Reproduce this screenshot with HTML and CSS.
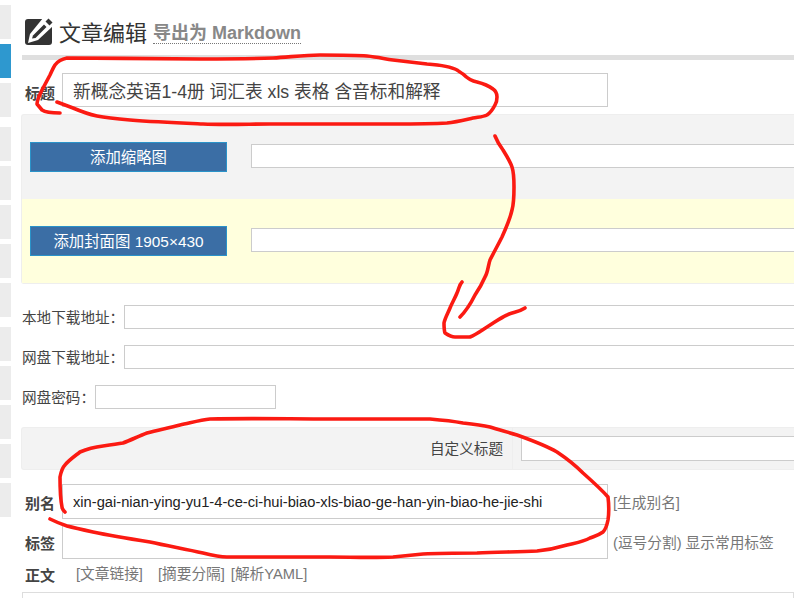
FILE: index.html
```html
<!DOCTYPE html>
<html lang="zh-CN">
  <head>
    <meta charset="UTF-8" />
    <title>文章编辑</title>
    <link rel="stylesheet" href="styles.css">
  </head>
  <body>
    <div class="tabs">
      <div class="tab"></div>
      <div class="tab active"></div>
      <div class="tab"></div>
      <div class="tab group"></div>
      <div class="tab"></div>
      <div class="tab"></div>
      <div class="tab"></div>
      <div class="tab"></div>
      <div class="tab group"></div>
      <div class="tab"></div>
      <div class="tab"></div>
      <div class="tab"></div>
      <div class="tab"></div>
    </div>
    <div class="main">
      <div class="heading">
        <svg class="heading-icon" viewBox="0 0 28 28">
          <rect x="0" y="1" width="27" height="26" rx="3" fill="#333"/>
          <path fill="#fff" d="M3 25l2-9L18 0h10v8L13 22z"/>
          <path fill="#333" d="M7 20.500l1-3L19 6.500 21.500 9 10.500 20z"/>
          <path fill="#333" d="M20.500 3.500l3-3 4 4-3 3z"/>
        </svg>
        <h1 class="title">文章编辑</h1>
        <a class="export">导出为 Markdown</a>
      </div>
      <div class="rule"></div>

      <div class="row title-row">
        <label class="field-label">标题</label>
        <input class="text big" value="新概念英语1-4册 词汇表 xls 表格 含音标和解释" />
      </div>

      <div class="panel">
        <div class="pic-row">
          <button class="pic-button">添加缩略图</button>
          <input class="text wide" />
        </div>
        <div class="pic-row yellow">
          <button class="pic-button">添加封面图 1905×430</button>
          <input class="text wide" />
        </div>
      </div>

      <div class="down-row">
        <span class="down-label">本地下载地址：</span>
        <input class="text wide" />
      </div>
      <div class="down-row">
        <span class="down-label">网盘下载地址：</span>
        <input class="text wide" />
      </div>
      <div class="down-row">
        <span class="down-label">网盘密码：</span>
        <input class="text short" />
      </div>

      <div class="custom">
        <span class="custom-label">自定义标题</span>
        <input class="text wide" />
      </div>

      <div class="row alias-row">
        <label class="field-label">别名</label>
        <input class="text slug" value="xin-gai-nian-ying-yu1-4-ce-ci-hui-biao-xls-biao-ge-han-yin-biao-he-jie-shi" />
        <a class="hint">[生成别名]</a>
      </div>
      <div class="row tag-row">
        <label class="field-label">标签</label>
        <input class="text slug" />
        <span class="hint">(逗号分割) 显示常用标签</span>
      </div>
      <div class="row body-row">
        <label class="field-label">正文</label>
        <a class="hint first">[文章链接]</a>
        <a class="hint second">[摘要分隔]</a>
        <a class="hint">[解析YAML]</a>
      </div>
      <div class="editor"></div>
    </div>

    <svg class="ink" viewBox="0 0 794 598">
      <path d="M60 113C52 113 45 112 42 110L37 104C37 100 40 94 42 90L50 75C52 71 53 68 55 65C58 61 62 59 67 58C110 58 160 59 200 59C230 59 250 59 273 58C290 57 305 55 320 55C340 55 355 55 367 56C378 57 385 59 393 60L427 64C440 65 450 66 457 70C460 72 461 73 463 74C467 78 471 81 477 82C485 84 489 86 493 89C496 91 497 94 497 97C497 100 497 102 495 105C493 109 490 113 487 115C483 117 478 117 473 118C464 120 456 122 447 123C430 124 410 124 393 124L270 124C250 124 225 125 203 124C180 123 155 122 130 120C118 119 107 118 97 116C88 114 80 111 73 108L57 102"/>
      <path d="M495 136C497 141 500 146 503 150C506 155 510 161 512 167C514 173 514 180 514 187C514 195 514 203 512 210C510 219 506 228 502 237C498 245 494 252 490 260C488 266 488 272 485 277C482 284 479 289 475 295C471 303 466 311 460 317"/>
      <path d="M462 282C459 285 459 289 457 293C455 298 452 303 450 308C448 313 445 318 444 323C444 327 444 330 445 333C448 335 451 337 455 337L470 337C477 334 482 330 487 327C494 323 500 318 507 315C513 312 519 312 525 308"/>
      <path d="M65 512C63 510 62 509 62 507C60 497 60 487 60 477C61 472 62 468 65 465C69 460 75 456 80 452C87 449 95 447 103 446C110 445 117 444 123 443C131 440 139 436 147 433C158 430 169 428 180 425C190 423 200 420 210 419C250 418 290 419 330 419L430 419C442 420 452 421 463 423C472 424 481 425 490 427C499 430 508 432 517 435C531 440 545 445 557 452C566 458 575 465 583 473C592 481 601 489 608 497C609 505 609 513 608 520C607 525 606 529 603 532C599 535 595 536 590 538C583 542 575 543 567 545C557 548 547 550 537 551C517 552 497 552 477 553C459 553 441 553 423 554C413 555 403 556 393 557C370 558 350 557 330 557L227 557C219 557 211 555 203 553C185 549 168 546 150 542C131 539 112 536 93 532C84 530 75 528 67 526C61 524 56 522 50 519"/>
    </svg>
  </body>
</html>
```
FILE: styles.css
```css
html,
body {
  margin: 0;
  height: 598px;
  overflow: hidden;
}

body {
  display: flex;
  background: #fff;
  color: #444;
  font-family: "Liberation Sans", "Noto Sans CJK SC", sans-serif;
  font-size: 14px;
  position: relative;
}

a {
  color: #777;
}

/* left tab strip */
.tabs {
  flex: none;
  width: 11px;
  padding-top: 5px;
  margin-right: 10px;
}

.tab {
  height: 34px;
  margin-bottom: 5px;
  background: #ececec;
}

.tab.active {
  background: #2e98cf;
}

.tab.group {
  margin-top: 10px;
}

.main {
  flex: none;
  width: 773px;
  height: 598px;
  overflow: hidden;
}

/* heading */
.heading {
  display: flex;
  align-items: flex-start;
  height: 55px;
  box-sizing: border-box;
  padding: 18px 0 0 4px;
}

.heading-icon {
  width: 28px;
  height: 28px;
  margin-right: 6px;
}

.title {
  margin: 1px 6px 0 0;
  font-size: 22px;
  font-weight: normal;
  line-height: 30px;
  color: #333;
}

.export {
  margin-top: 4px;
  height: 21px;
  font-size: 18px;
  font-weight: bold;
  line-height: 22px;
  color: #888;
  border-bottom: 1px dotted #777;
}

.rule {
  height: 5px;
  margin-left: 1px;
  background: #dfdfdf;
}

/* inputs */
.text {
  display: block;
  flex: none;
  box-sizing: border-box;
  margin: 0;
  padding: 0 10px;
  height: 24px;
  border: 1px solid #ccc;
  background: #fff;
  font-family: inherit;
  outline: none;
}

.text.wide {
  width: 800px;
}

.text.short {
  width: 181px;
}

.text.big {
  width: 546px;
  height: 34px;
  font-size: 17.7px;
  color: #444;
}

.text.slug {
  width: 546px;
  height: 35px;
  font-size: 14.7px;
  color: #222;
}

/* labelled rows */
.row {
  display: flex;
  align-items: center;
}

.field-label {
  width: 37px;
  margin-left: 4px;
  padding-top: 1px;
  flex: none;
  font-size: 15px;
  font-weight: bold;
  color: #444;
}

.title-row {
  margin-top: 13px;
}

.title-row .field-label {
  padding-top: 5px;
}

.hint {
  margin-left: 5px;
  font-size: 14.7px;
  color: #777;
  white-space: nowrap;
}

.alias-row {
  margin-top: 14px;
}

.tag-row {
  margin-top: 5px;
}

.body-row {
  height: 26px;
}

.body-row .field-label {
  width: 51px;
  padding-top: 4px;
}

.body-row .hint {
  margin-left: 0;
}

.hint.first {
  margin-right: 15px;
}

.hint.second {
  margin-right: 6px;
}

/* picture panel */
.panel {
  margin-top: 7px;
  border-top: 1px solid #eee;
  border-left: 1px solid #eee;
  border-bottom: 1px solid #eee;
  border-radius: 3px 0 0 3px;
  background: #f3f3f3;
}

.pic-row {
  display: flex;
  align-items: center;
  gap: 24px;
  height: 84px;
  padding: 0 8px;
  box-sizing: border-box;
}

.pic-row .text {
  margin-bottom: 2px;
}

.pic-row.yellow {
  background: #ffd;
}

.pic-button {
  flex: none;
  width: 197px;
  height: 30px;
  box-sizing: border-box;
  border: 1px solid #2a93c9;
  background: #3b6ea5;
  color: #fff;
  font-family: inherit;
  font-size: 15.4px;
  padding: 0 0 2px;
}

/* download rows */
.down-row {
  display: flex;
  align-items: center;
  margin-top: 16px;
  margin-left: 1px;
}

.down-label {
  flex: none;
  padding-bottom: 2px;
  font-size: 14.6px;
  color: #444;
  white-space: nowrap;
}

.panel + .down-row {
  margin-top: 21px;
}

/* custom title strip */
.custom {
  display: flex;
  align-items: center;
  height: 41px;
  margin-top: 18px;
  padding-left: 408px;
  border: 1px solid #eee;
  border-right: 0;
  border-radius: 3px 0 0 3px;
  background: #f3f3f3;
}

.custom-label {
  flex: none;
  width: 82px;
  height: 100%;
  font-size: 14.6px;
  line-height: 42px;
  border-right: 1px solid #eee;
  margin-right: 8px;
  white-space: nowrap;
}

.custom .text {
  height: 25px;
}

/* editor top edge */
.editor {
  height: 40px;
  margin-top: 7px;
  margin-left: 1px;
  border: 1px solid #ddd;
}

/* hand drawn red marks over the page */
.ink {
  position: absolute;
  left: 0;
  top: 0;
  width: 794px;
  height: 598px;
  fill: none;
  stroke: #fb1a12;
  stroke-width: 3.6;
  stroke-linecap: round;
  stroke-linejoin: round;
  pointer-events: none;
}
```
